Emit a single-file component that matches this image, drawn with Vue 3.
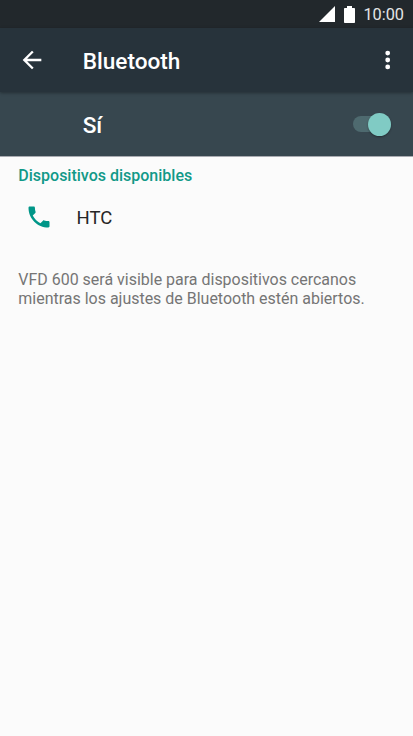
<template>
  <div class="screen">
    <div class="status-bar">
      <svg class="signal" width="16" height="16" viewBox="0 0 16 16">
        <path d="M16 0v16H0z" fill="#fff" />
      </svg>
      <svg class="battery" width="11" height="17" viewBox="0 0 11 17">
        <path d="M3 0h5v2h2.2a.8.8 0 0 1 .8.8v13.4a.8.8 0 0 1-.8.8H.8a.8.8 0 0 1-.8-.8V2.8A.8.8 0 0 1 .8 2H3z" fill="#fff" />
      </svg>
      <span class="clock">10:00</span>
    </div>

    <header class="app-bar">
      <button class="icon-button back" aria-label="Atrás">
        <svg width="28" height="28" viewBox="0 0 24 24">
          <path d="M20 11H7.83l5.59-5.59L12 4l-8 8 8 8 1.41-1.41L7.83 13H20z" fill="#fff" />
        </svg>
      </button>
      <h1 class="title">Bluetooth</h1>
      <button class="icon-button menu" aria-label="Más opciones">
        <svg width="6" height="20" viewBox="0 0 6 20">
          <circle v-for="y in [3.1, 10, 16.9]" :key="y" cx="2.7" :cy="y" r="2.4" fill="#fff" />
        </svg>
      </button>
    </header>

    <div class="switch-bar" @click="enabled = !enabled">
      <span class="switch-label">{{ enabled ? 'Sí' : 'No' }}</span>
      <div class="switch" :class="{ on: enabled }">
        <div class="thumb"></div>
      </div>
    </div>

    <main class="content">
      <h2 class="section-title">Dispositivos disponibles</h2>
      <div v-for="device in devices" :key="device" class="device">
        <svg class="phone" width="28" height="28" viewBox="0 0 24 24">
          <path d="M6.62 10.79c1.44 2.83 3.76 5.14 6.59 6.59l2.2-2.2c.27-.27.67-.36 1.02-.24 1.12.37 2.33.57 3.57.57.55 0 1 .45 1 1V20c0 .55-.45 1-1 1-9.39 0-17-7.61-17-17 0-.55.45-1 1-1h3.5c.55 0 1 .45 1 1 0 1.25.2 2.45.57 3.57.11.35.03.74-.25 1.02z" fill="#009688" />
        </svg>
        <span class="device-name">{{ device }}</span>
      </div>
      <p class="note">
        VFD 600 será visible para dispositivos cercanos<br />
        mientras los ajustes de Bluetooth estén abiertos.
      </p>
    </main>
  </div>
</template>

<script setup>
import { ref } from 'vue';

const enabled = ref(true);
const devices = ['HTC'];
</script>

<style>
body {
  margin: 0;
  background: #fbfbfb;
}
</style>

<style scoped>
.screen {
  height: 736px;
  display: flex;
  flex-direction: column;
  overflow: hidden;
  background: #fbfbfb;
  font-family: Roboto, sans-serif;
}

.status-bar {
  height: 28px;
  flex: none;
  display: flex;
  align-items: center;
  justify-content: flex-end;
  box-sizing: border-box;
  padding-right: 9px;
  background: #22282c;
}

.battery {
  margin-left: 9px;
  margin-right: 8px;
}

.clock {
  color: #e4e6e7;
  font-size: 16.3px;
  line-height: 28px;
  padding-top: 1px;
}

.app-bar {
  height: 64px;
  flex: none;
  display: flex;
  align-items: center;
  box-sizing: border-box;
  padding: 0 22px 0 18px;
  background: #27333b;
  box-shadow: 0 1px 3px rgba(0, 0, 0, 0.35);
  z-index: 1;
}

.icon-button {
  display: flex;
  padding: 0;
  border: 0;
  background: none;
  cursor: pointer;
}

.title {
  flex: 1;
  margin: 2px 0 0 36.7px;
  color: #fff;
  font-size: 22.6px;
  font-weight: 500;
}

.switch-bar {
  height: 64px;
  flex: none;
  display: flex;
  align-items: center;
  justify-content: space-between;
  padding: 0 22.3px 0 82.7px;
  background: #37474f;
  border-bottom: 1px solid #a9abb1;
  cursor: pointer;
}

.switch-label {
  color: #fff;
  font-size: 22.6px;
  font-weight: 500;
  padding-top: 3px;
}

.switch {
  width: 37.5px;
  height: 16px;
  display: flex;
  align-items: center;
  border-radius: 8px;
  background: #4e6a6f;
}

.switch.on {
  justify-content: flex-end;
}

.thumb {
  width: 23px;
  height: 23px;
  border-radius: 50%;
  background: #80cbc4;
  box-shadow: 0 1px 2px rgba(0, 0, 0, 0.35);
}

.content {
  padding: 9px 18.3px 0;
}

.section-title {
  margin: 0;
  color: #119988;
  font-size: 16px;
  font-weight: 500;
  line-height: 20px;
}

.device {
  height: 64px;
  display: flex;
  align-items: center;
}

.phone {
  margin: 0 0 2px 6.7px;
}

.device-name {
  margin-left: 23.6px;
  color: #262626;
  font-size: 18.5px;
}

.note {
  margin: 20px 0 0;
  color: #757575;
  font-size: 15.97px;
  line-height: 19px;
  white-space: nowrap;
}
</style>
